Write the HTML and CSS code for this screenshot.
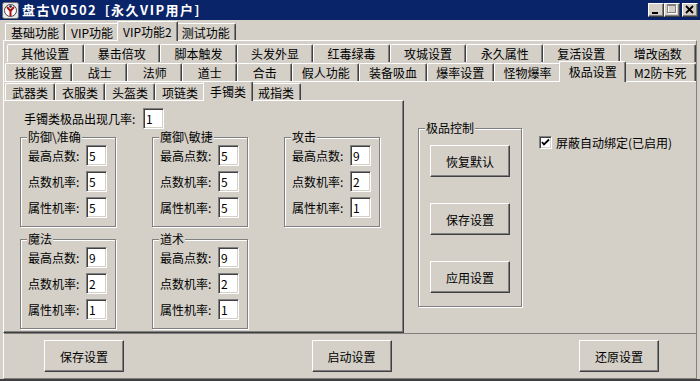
FILE: index.html
```html
<!DOCTYPE html>
<html lang="zh-CN">
  <head>
    <meta charset="UTF-8" />
    <title>盘古V0502</title>
    <link rel="stylesheet" href="styles.css">
  </head>
  <body>
    <div class="window">
      <div class="titlebar">
        <svg class="app-icon" viewBox="0 0 17 17" width="17" height="17">
          <rect x="0.5" y="0.5" width="16" height="16" rx="2" fill="#e8e8e8" stroke="#6b6b6b" />
          <circle cx="8.5" cy="8.5" r="6" fill="#fff" stroke="#444" />
          <path d="M5 5 L8.5 9 L12 5 M8.5 9 L8.5 14" stroke="#b01010" stroke-width="2" fill="none" />
          <circle cx="8.5" cy="4.5" r="1.3" fill="#222" />
        </svg>
        <span class="title">盘古V0502 [永久VIP用户]</span>
        <div class="caption-btns">
          <span class="cbtn">
            <svg viewBox="0 0 14 12" width="14" height="12"><rect x="3" y="8" width="6" height="2" fill="#000" /></svg>
          </span>
          <span class="cbtn">
            <svg viewBox="0 0 14 12" width="14" height="12">
              <rect x="3.5" y="1.5" width="8" height="8" fill="none" stroke="#fff" />
              <rect x="2.5" y="0.5" width="8" height="8" fill="none" stroke="#808080" />
              <rect x="3" y="1" width="7" height="1" fill="#808080" />
            </svg>
          </span>
          <span class="cbtn close">
            <svg viewBox="0 0 14 12" width="14" height="12"><path d="M3 2 L10 9 M10 2 L3 9" stroke="#000" stroke-width="1.8" /></svg>
          </span>
        </div>
      </div>

      <div class="client">
        <div class="tabrow top-tabs">
          <span class="tab">基础功能</span>
          <span class="tab">VIP功能</span>
          <span class="tab active">VIP功能2</span>
          <span class="tab">测试功能</span>
        </div>

        <div class="page">
          <div class="tabrow row-back">
            <span class="tab">其他设置</span>
            <span class="tab">暴击倍攻</span>
            <span class="tab">脚本触发</span>
            <span class="tab">头发外显</span>
            <span class="tab">红毒绿毒</span>
            <span class="tab">攻城设置</span>
            <span class="tab">永久属性</span>
            <span class="tab">复活设置</span>
            <span class="tab">增改函数</span>
          </div>
          <div class="tabrow row-front">
            <span class="tab">技能设置</span>
            <span class="tab">战士</span>
            <span class="tab">法师</span>
            <span class="tab">道士</span>
            <span class="tab">合击</span>
            <span class="tab">假人功能</span>
            <span class="tab">装备吸血</span>
            <span class="tab">爆率设置</span>
            <span class="tab">怪物爆率</span>
            <span class="tab active">极品设置</span>
            <span class="tab">M2防卡死</span>
          </div>

          <div class="subpage">
            <div class="content">
              <div class="left-col">
                <div class="tabrow sub-tabs">
                  <span class="tab">武器类</span>
                  <span class="tab">衣服类</span>
                  <span class="tab">头盔类</span>
                  <span class="tab">项链类</span>
                  <span class="tab active">手镯类</span>
                  <span class="tab">戒指类</span>
                </div>
                <div class="panel">
                  <div class="chance-row">
                    <span class="chance-label">手镯类极品出现几率:</span>
                    <input class="field" type="text" value="1" />
                  </div>
                  <div class="groups">
                    <div class="group">
                      <span class="group-title">防御\准确</span>
                      <div class="field-row"><span class="field-label">最高点数:</span><input class="field" type="text" value="5" /></div>
                      <div class="field-row"><span class="field-label">点数机率:</span><input class="field" type="text" value="5" /></div>
                      <div class="field-row"><span class="field-label">属性机率:</span><input class="field" type="text" value="5" /></div>
                    </div>
                    <div class="group">
                      <span class="group-title">魔御\敏捷</span>
                      <div class="field-row"><span class="field-label">最高点数:</span><input class="field" type="text" value="5" /></div>
                      <div class="field-row"><span class="field-label">点数机率:</span><input class="field" type="text" value="5" /></div>
                      <div class="field-row"><span class="field-label">属性机率:</span><input class="field" type="text" value="5" /></div>
                    </div>
                    <div class="group">
                      <span class="group-title">攻击</span>
                      <div class="field-row"><span class="field-label">最高点数:</span><input class="field" type="text" value="9" /></div>
                      <div class="field-row"><span class="field-label">点数机率:</span><input class="field" type="text" value="2" /></div>
                      <div class="field-row"><span class="field-label">属性机率:</span><input class="field" type="text" value="1" /></div>
                    </div>
                    <div class="group">
                      <span class="group-title">魔法</span>
                      <div class="field-row"><span class="field-label">最高点数:</span><input class="field" type="text" value="9" /></div>
                      <div class="field-row"><span class="field-label">点数机率:</span><input class="field" type="text" value="2" /></div>
                      <div class="field-row"><span class="field-label">属性机率:</span><input class="field" type="text" value="1" /></div>
                    </div>
                    <div class="group">
                      <span class="group-title">道术</span>
                      <div class="field-row"><span class="field-label">最高点数:</span><input class="field" type="text" value="9" /></div>
                      <div class="field-row"><span class="field-label">点数机率:</span><input class="field" type="text" value="2" /></div>
                      <div class="field-row"><span class="field-label">属性机率:</span><input class="field" type="text" value="1" /></div>
                    </div>
                  </div>
                </div>
              </div>

              <div class="right-col">
                <div class="group control">
                  <span class="group-title">极品控制</span>
                  <button class="btn">恢复默认</button>
                  <button class="btn">保存设置</button>
                  <button class="btn">应用设置</button>
                </div>
                <label class="check">
                  <span class="checkbox">
                    <svg viewBox="0 0 9 9" width="9" height="9"><path d="M1 4 L3 6.5 L8 1.5" stroke="#000" stroke-width="1.8" fill="none" /></svg>
                  </span>
                  屏蔽自动绑定(已启用)
                </label>
              </div>
            </div>

            <div class="footer">
              <button class="btn">保存设置</button>
              <button class="btn">启动设置</button>
              <button class="btn">还原设置</button>
            </div>
          </div>
        </div>
      </div>
    </div>
  </body>
</html>
```

FILE: styles.css
```css
* {
  box-sizing: border-box;
}
body {
  margin: 0;
  width: 700px;
  height: 381px;
  overflow: hidden;
  background-color: #d4d0c8;
  font-family: "Noto Sans CJK SC", "Liberation Sans", sans-serif;
  font-size: 12px;
  color: #000;
}
.window {
  height: 381px;
  border-bottom: 2px solid #404040;
}

/* title bar */
.titlebar {
  height: 20px;
  background-color: #0a246a;
  display: flex;
  align-items: center;
  padding: 0 2px 0 2px;
  color: #fff;
}
.app-icon {
  flex: none;
  margin-right: 3px;
}
.title {
  flex: 1;
  font-size: 13px;
  font-weight: bold;
  line-height: 20px;
  letter-spacing: 1.5px;
  word-spacing: 3px;
}
.caption-btns {
  display: flex;
}
.cbtn {
  width: 16px;
  height: 14px;
  background-color: #d4d0c8;
  border: 1px solid;
  border-color: #fff #404040 #404040 #fff;
  box-shadow: inset -1px -1px #808080;
  display: flex;
}
.cbtn.close {
  margin-left: 2px;
}

/* tabs */
.client {
  padding: 0 3px;
}
.tabrow {
  display: flex;
  align-items: flex-end;
}
.tab {
  height: 18px;
  line-height: 17px;
  padding: 0 6px;
  text-align: center;
  white-space: nowrap;
  border: 1px solid;
  border-bottom: none;
  border-color: #fff #404040 #fff #fff;
  border-radius: 2px 2px 0 0;
  box-shadow: inset -1px 0 #808080;
  background-color: #d4d0c8;
}
.tab.active {
  height: 21px;
  line-height: 19px;
  margin: 0 -2px -1px;
  position: relative;
  z-index: 2;
}
.top-tabs {
  height: 20px;
  padding-left: 2px;
}
.top-tabs .tab {
  height: 17px;
  padding: 0 5px;
}
.top-tabs .tab.active {
  height: 20px;
}
.page {
  border-top: 1px solid #fff;
  border-left: 1px solid #fff;
  border-right: 1px solid #808080;
  border-bottom: 1px solid #808080;
}
.row-back {
  height: 21px;
  padding-left: 3px;
}
.row-back .tab {
  flex: 1;
}
.row-front {
  height: 19px;
  padding-left: 1px;
}
.row-front .tab {
  flex: 1 1 auto;
  min-width: 55px;
  padding: 0 8px;
}
.row-front .tab.active {
  height: 21px;
}
.subpage {
  border-top: 1px solid #fff;
}
.content {
  display: flex;
  height: 252px;
  border-bottom: 1px solid #808080;
}
.left-col {
  width: 401px;
  display: flex;
  flex-direction: column;
  margin-left: -1px;
}
.sub-tabs {
  height: 18px;
  padding-left: 2px;
}
.sub-tabs .tab {
  height: 17px;
}
.sub-tabs .tab.active {
  height: 20px;
}

/* panel with the groups */
.panel {
  flex: 1;
  border: 1px solid;
  border-color: #fff #404040 #404040 #fff;
  box-shadow: inset -1px -1px #808080;
  padding: 7px 0 0 16px;
}
.chance-row {
  display: flex;
  align-items: center;
  padding-left: 4px;
  height: 21px;
}
.chance-label {
  width: 119px;
}
.field {
  width: 21px;
  height: 21px;
  padding: 0 0 0 2px;
  margin: 0;
  border: 1px solid;
  border-color: #808080 #fff #fff #808080;
  box-shadow: inset 1px 1px #404040, inset -1px -1px #d4d0c8;
  background-color: #fff;
  font-family: "Noto Sans CJK SC", "Liberation Sans", sans-serif;
  font-size: 12px;
  color: #000;
  outline: none;
}
.groups {
  display: grid;
  grid-template-columns: 96px 96px 96px;
  column-gap: 36px;
  row-gap: 12px;
  margin-top: 8px;
}
.group {
  position: relative;
  height: 90px;
  border: 1px solid #808080;
  box-shadow: 1px 1px #fff, inset 1px 1px #fff;
  padding: 7px 0 0 7px;
  display: flex;
  flex-direction: column;
  gap: 5px;
}
.group-title {
  position: absolute;
  top: -8px;
  left: 6px;
  padding: 0 1px;
  line-height: 14px;
  background-color: #d4d0c8;
}
.field-row {
  display: flex;
  align-items: center;
  height: 21px;
}
.field-label {
  width: 58px;
}

/* right side */
.right-col {
  flex: 1;
  display: flex;
  align-items: flex-start;
  padding: 46px 0 0 14px;
}
.group.control {
  width: 104px;
  height: 179px;
  padding: 16px 0 0 11px;
  gap: 26px;
}
.btn {
  width: 80px;
  height: 32px;
  padding: 0;
  background-color: #d4d0c8;
  border: 1px solid;
  border-color: #fff #404040 #404040 #fff;
  box-shadow: inset -1px -1px #808080;
  font-family: "Noto Sans CJK SC", "Liberation Sans", sans-serif;
  font-size: 12px;
  color: #000;
}
.check {
  display: flex;
  align-items: center;
  gap: 4px;
  margin: 8px 0 0 17px;
  line-height: 13px;
}
.checkbox {
  width: 13px;
  height: 13px;
  background-color: #fff;
  border: 1px solid;
  border-color: #808080 #fff #fff #808080;
  box-shadow: inset 1px 1px #404040, inset -1px -1px #d4d0c8;
  display: flex;
  align-items: center;
  justify-content: center;
}

/* bottom buttons */
.footer {
  height: 44px;
  display: flex;
  justify-content: space-between;
  align-items: flex-start;
  padding: 6px 37px 0 40px;
}
```
